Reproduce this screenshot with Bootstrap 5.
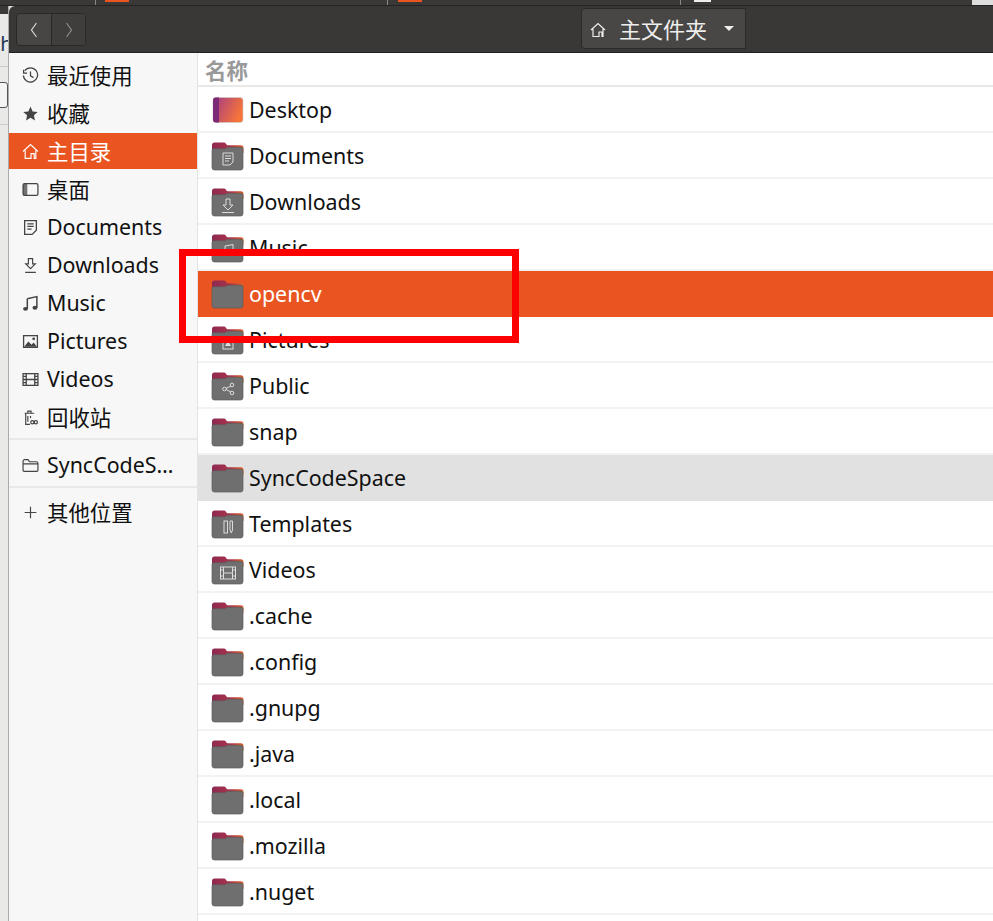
<!DOCTYPE html>
<html lang="zh">
<head>
<meta charset="utf-8">
<title>主文件夹</title>
<link href="https://cdn.jsdelivr.net/npm/bootstrap@5.3.3/dist/css/bootstrap.min.css" rel="stylesheet">
<style>
  html, body { height: 921px; overflow: hidden; }
  body { font-family: "Noto Sans", "Noto Sans CJK SC", sans-serif; font-size: 21.4px; color: #111; background: #e4e4e2; }
  .desk { width: 993px; height: 921px; position: relative; overflow: hidden; }
  /* bits of the browser behind the window */
  .topstrip { height: 6px; background: #3b3937; border-bottom: 1px solid #242322; position: relative; }
  .tabmark { position: absolute; top: 0; height: 2px; background: #e95420; }
  .tabwhite { position: absolute; top: 0; left: 694px; width: 17px; height: 2px; background: #eee; }
  .tabcorner { position: absolute; top: 0; right: 0; width: 21px; height: 5px; background: #ddd; }
  .tabsep { position: absolute; top: 0; height: 5px; width: 1px; background: #8a8886; }
  .backedge { width: 9px; flex: none; background: #e9e9e7; border-right: 1px solid #aaa; position: relative; overflow: hidden; }
  .backtab { height: 8px; background: #3b3937; }
  .backline { position: absolute; left: 0; right: 0; height: 1px; background: #ccc; }
  .backtext { position: absolute; left: -7px; top: 26px; font-size: 20px; line-height: 24px; color: #1c3555; }
  .backbox { position: absolute; left: -8px; top: 76px; width: 16px; height: 26px; border: 1px solid #555; border-radius: 3px; background: #f4f4f4; }
  .winbody { height: 915px; }
  .fm-window { flex: 1; min-width: 0; border-top-left-radius: 6px; overflow: hidden; background: #fff; }
  .fm-head { height: 47px; background: #3a3836; border-bottom: 1px solid #222; padding: 7px 0 0 7px; position: relative; }
  .navgroup { width: 70px; height: 33px; border: 1px solid #2a2827; border-radius: 4px; background: #484644; overflow: hidden; }
  .navbtn { width: 50%; height: 100%; }
  .navbtn + .navbtn { border-left: 1px solid #2a2827; background: #403e3c; }
  .pathbtn { position: absolute; left: 572px; top: 2px; width: 165px; height: 41px; background: #494745; border: 1px solid #2c2a29; border-radius: 4px 0 0 4px; color: #eee; font-size: 22px; padding-left: 8px; padding-top: 2px; gap: 13px; }
  .caret-down { width: 0; height: 0; border-left: 5px solid transparent; border-right: 5px solid transparent; border-top: 5px solid #eee; margin-left: 4px; margin-top: -3px; }
  .fm-side { width: 189px; flex: none; background: #f7f7f7; border-right: 1px solid #e3e3e3; padding-top: 4px; }
  .sideitem { height: 36px; margin-bottom: 2px; padding-left: 13px; gap: 8px; line-height: 1; white-space: nowrap; }
  .sideitem.active { background: #e95420; color: #fff; }
  .sideicon { width: 17px; height: 17px; flex: none; color: #444; }
  .active .sideicon { color: #fff; }
  .cjk-label { padding-top: 2px; }
  .sidesep { height: 2px; background: #e9e9e9; }
  .sidesep-a { margin-top: 3px; margin-bottom: 7px; }
  .sidesep-b { margin-top: 3px; margin-bottom: 6px; }
  .fm-main { flex: 1; min-width: 0; background: #fff; }
  .colhead { height: 34px; padding-left: 7px; border-bottom: 2px solid #e8e8e8; color: #999; font-weight: 700; font-size: 21.5px; line-height: 36px; }
  .filerow { height: 46px; padding: 2px 0 0 13px; gap: 5px; border-bottom: 2px solid #f2f2f2; line-height: 1; }
  .filerow.picked { background: #e95420; color: #fff; border-bottom-color: #e95420; }
  .filerow.hover-row { background: #e1e1e1; border-bottom-color: #e1e1e1; }
  .fileicon { width: 33px; height: 30px; flex: none; }
  .redbox { position: absolute; left: 179px; top: 249px; width: 340px; height: 94px; border: 7px solid #fe0000; pointer-events: none; }
</style>
</head>
<body>
<svg width="0" height="0" class="position-absolute">
  <defs>
    <linearGradient id="tabgrad" x1="0" x2="1" y1="0" y2="0">
      <stop offset="0" stop-color="#8c2a52"/><stop offset="0.55" stop-color="#a8324a"/><stop offset="1" stop-color="#e0632c"/>
    </linearGradient>
    <linearGradient id="deskgrad" x1="0" x2="1" y1="0" y2="0.4">
      <stop offset="0" stop-color="#a23a86"/><stop offset="1" stop-color="#f5743a"/>
    </linearGradient>
    <symbol id="folder" viewBox="0 0 33 30">
      <path d="M1 11V4a2.500 2.500 0 0 1 2.500-2.500h9c1.500 0 2 .5 3 2l.5 .7H30a2.500 2.500 0 0 1 2.500 2.500V12z" fill="url(#tabgrad)"/>
      <path d="M1 9.500c0-1 .8-1.700 1.700-1.700h10.500c1.300 0 2-.6 2.800-1.500h14.300c1 0 1.700 .8 1.700 1.700V26.500a2.500 2.500 0 0 1-2.500 2.500H3.500A2.500 2.500 0 0 1 1 26.500z" fill="#6f6f6f" stroke="#5c5c5c" stroke-width=".7"/>
    </symbol>
  </defs>
</svg>

<div class="desk">
  <div class="topstrip">
    <span class="tabsep" style="left:95px"></span>
    <span class="tabmark" style="left:105px;width:24px"></span>
    <span class="tabsep" style="left:387px"></span>
    <span class="tabmark" style="left:398px;width:24px"></span>
    <span class="tabsep" style="left:680px"></span>
    <span class="tabwhite"></span>
    <span class="tabcorner"></span>
  </div>
  <div class="d-flex winbody">
    <div class="backedge">
      <div class="backtab"></div>
      <span class="backline" style="top:60px"></span>
      <span class="backline" style="top:118px"></span>
      <span class="backtext">th</span>
      <span class="backbox"></span>
    </div>
    <div class="fm-window d-flex flex-column">
      <div class="fm-head">
        <div class="navgroup d-flex">
          <div class="navbtn d-flex align-items-center justify-content-center">
            <svg width="8" height="16" viewBox="0 0 8 16"><path d="M6.500 1 1.500 8l5 7" fill="none" stroke="#d6d6d4" stroke-width="1.200"/></svg>
          </div>
          <div class="navbtn d-flex align-items-center justify-content-center">
            <svg width="8" height="16" viewBox="0 0 8 16"><path d="M1.500 1l5 7-5 7" fill="none" stroke="#8e8c8a" stroke-width="1.200"/></svg>
          </div>
        </div>
        <div class="pathbtn d-flex align-items-center">
          <svg width="16" height="16" viewBox="0 0 16 16" fill="none" stroke="#eee" stroke-width="1.200"><path d="M1 8 8 1.500 15 8M3 7v7.500h6V10h3v4.500h1V7"/></svg>
          <span>主文件夹</span>
          <span class="caret-down"></span>
        </div>
      </div>
      <div class="d-flex flex-grow-1">
        <nav class="fm-side">
          <div class="sideitem d-flex align-items-center">
            <svg class="sideicon" viewBox="0 0 16 16" fill="none" stroke="currentColor" stroke-width="1.200"><path d="M2.600 3.500A6.700 6.700 0 1 1 1.300 8"/><path d="M1.500 2.500v3.300h3.300" /><path d="M8 4.200V8.300l2.800 1.700"/></svg>
            <span class="cjk-label">最近使用</span>
          </div>
          <div class="sideitem d-flex align-items-center">
            <svg class="sideicon" viewBox="0 0 16 16"><path d="M8 1.500l2 4.500 4.800.5-3.600 3.200 1 4.800L8 12l-4.200 2.500 1-4.800L1.200 6.500 6 6z" fill="currentColor"/></svg>
            <span class="cjk-label">收藏</span>
          </div>
          <div class="sideitem active d-flex align-items-center">
            <svg class="sideicon" viewBox="0 0 16 16" fill="none" stroke="currentColor" stroke-width="1.100"><path d="M1 8 8 1.500 15 8M3 7v7.500h5.500V10h3v4.500H13V7"/></svg>
            <span class="cjk-label">主目录</span>
          </div>
          <div class="sideitem d-flex align-items-center">
            <svg class="sideicon" viewBox="0 0 16 16"><rect x="1" y="2.500" width="14" height="11" rx="1.500" fill="none" stroke="currentColor" stroke-width="1.200"/><rect x="1" y="2.500" width="4" height="11" rx="1" fill="currentColor" opacity=".75"/></svg>
            <span class="cjk-label">桌面</span>
          </div>
          <div class="sideitem d-flex align-items-center">
            <svg class="sideicon" viewBox="0 0 16 16" fill="none" stroke="currentColor" stroke-width="1.200"><path d="M2.500 1.500h11v9l-4 4h-7z"/><path d="M5 4.500h6M5 7h6M5 9.500h4"/></svg>
            <span>Documents</span>
          </div>
          <div class="sideitem d-flex align-items-center">
            <svg class="sideicon" viewBox="0 0 16 16" fill="none" stroke="currentColor" stroke-width="1.100"><path d="M6 1.500h4v5h2.500L8 11 3.500 6.500H6zM3 14.500h10"/></svg>
            <span>Downloads</span>
          </div>
          <div class="sideitem d-flex align-items-center">
            <svg class="sideicon" viewBox="0 0 16 16"><path d="M5 3.500 14 1.500V12" fill="none" stroke="currentColor" stroke-width="1.400"/><path d="M5 3.500V13" fill="none" stroke="currentColor" stroke-width="1.400"/><ellipse cx="3.300" cy="13" rx="2.300" ry="1.800" fill="currentColor"/><ellipse cx="12.200" cy="12" rx="2.300" ry="1.800" fill="currentColor"/></svg>
            <span>Music</span>
          </div>
          <div class="sideitem d-flex align-items-center">
            <svg class="sideicon" viewBox="0 0 16 16"><rect x="1.500" y="2.500" width="13" height="11" fill="none" stroke="currentColor" stroke-width="1.200"/><path d="M2 13l4-5 3 3 2-2 3 4z" fill="currentColor"/><circle cx="11" cy="5.500" r="1.300" fill="currentColor"/></svg>
            <span>Pictures</span>
          </div>
          <div class="sideitem d-flex align-items-center">
            <svg class="sideicon" viewBox="0 0 16 16" fill="none" stroke="currentColor" stroke-width="1.200"><rect x="1" y="2.500" width="14" height="11"/><path d="M4 2.500v11M12 2.500v11M4 8h8M1 5h3M1 8h3M1 11h3M12 5h3M12 8h3M12 11h3"/></svg>
            <span>Videos</span>
          </div>
          <div class="sideitem d-flex align-items-center">
            <svg class="sideicon" viewBox="0 0 16 16" fill="none" stroke="currentColor" stroke-width="1.100"><path d="M2.500 4h9M5.500 4V2h3v2M3.500 4v10.500h4M5.500 6.500v5.500M8 6.500v2"/><circle cx="9.700" cy="12.500" r="1.500"/><circle cx="13" cy="12.500" r="1.500"/></svg>
            <span class="cjk-label">回收站</span>
          </div>
          <div class="sidesep sidesep-a"></div>
          <div class="sideitem d-flex align-items-center">
            <svg class="sideicon" viewBox="0 0 16 16" fill="none" stroke="currentColor" stroke-width="1.100"><path d="M1 4a1.500 1.500 0 0 1 1.500-1.500h3.200L7 4.500h6.500A1.500 1.500 0 0 1 15 6v6.500a1 1 0 0 1-1 1H2a1 1 0 0 1-1-1zM1 6.500h14"/></svg>
            <span>SyncCodeS…</span>
          </div>
          <div class="sidesep sidesep-b"></div>
          <div class="sideitem d-flex align-items-center">
            <svg class="sideicon" viewBox="0 0 16 16" fill="none" stroke="currentColor" stroke-width="1.100"><path d="M8 2.500v11M2.500 8h11"/></svg>
            <span class="cjk-label">其他位置</span>
          </div>
        </nav>
        <main class="fm-main">
          <div class="colhead">名称</div>
          <div class="filerow d-flex align-items-center">
            <svg class="fileicon" viewBox="0 0 33 30"><rect x="2" y="2.500" width="30" height="25" rx="3" fill="url(#deskgrad)" stroke="#ccc" stroke-width=".6"/><path d="M5 2.500h3v25H5a3 3 0 0 1-3-3v-19a3 3 0 0 1 3-3z" fill="#7b2a78"/></svg>
            <span>Desktop</span>
          </div>
          <div class="filerow d-flex align-items-center">
            <svg class="fileicon" viewBox="0 0 33 30"><use href="#folder"/><path d="M12 12h10v9l-3 3h-7z" fill="none" stroke="#ddd" stroke-width="1"/><path d="M14 15h6M14 17.500h6M14 20h4" stroke="#ddd"/></svg>
            <span>Documents</span>
          </div>
          <div class="filerow d-flex align-items-center">
            <svg class="fileicon" viewBox="0 0 33 30"><use href="#folder"/><path d="M15 12h4v6h3l-5 5-5-5h3zM11 25.500h12" fill="none" stroke="#ddd"/></svg>
            <span>Downloads</span>
          </div>
          <div class="filerow d-flex align-items-center">
            <svg class="fileicon" viewBox="0 0 33 30"><use href="#folder"/><path d="M14 13l8-1.500v8M14 13v9" fill="none" stroke="#ddd"/></svg>
            <span>Music</span>
          </div>
          <div class="filerow picked d-flex align-items-center">
            <svg class="fileicon" viewBox="0 0 33 30"><use href="#folder"/></svg>
            <span>opencv</span>
          </div>
          <div class="filerow d-flex align-items-center">
            <svg class="fileicon" viewBox="0 0 33 30"><use href="#folder"/><rect x="12" y="12" width="10" height="12" fill="none" stroke="#ddd"/><path d="M14 21l3-5 3 5z" fill="#ddd"/></svg>
            <span>Pictures</span>
          </div>
          <div class="filerow d-flex align-items-center">
            <svg class="fileicon" viewBox="0 0 33 30"><use href="#folder"/><path d="M14 18l7-3.500M14 18l7 3.500" stroke="#ddd"/><circle cx="13.500" cy="18" r="1.800" fill="#6f6f6f" stroke="#ddd"/><circle cx="21" cy="14" r="1.800" fill="#6f6f6f" stroke="#ddd"/><circle cx="21" cy="22" r="1.800" fill="#6f6f6f" stroke="#ddd"/></svg>
            <span>Public</span>
          </div>
          <div class="filerow d-flex align-items-center">
            <svg class="fileicon" viewBox="0 0 33 30"><use href="#folder"/></svg>
            <span>snap</span>
          </div>
          <div class="filerow hover-row d-flex align-items-center">
            <svg class="fileicon" viewBox="0 0 33 30"><use href="#folder"/></svg>
            <span>SyncCodeSpace</span>
          </div>
          <div class="filerow d-flex align-items-center">
            <svg class="fileicon" viewBox="0 0 33 30"><use href="#folder"/><rect x="13" y="12" width="3.500" height="12" fill="none" stroke="#ddd"/><path d="M19 12h2.500v9l-1.200 3-1.300-3z" fill="none" stroke="#ddd"/></svg>
            <span>Templates</span>
          </div>
          <div class="filerow d-flex align-items-center">
            <svg class="fileicon" viewBox="0 0 33 30"><use href="#folder"/><rect x="9.500" y="12" width="15" height="12" fill="none" stroke="#ddd"/><path d="M12.500 12v12M21.500 12v12M12.500 18h9M9.500 15h3M9.500 21h3M21.500 15h3M21.500 21h3" stroke="#ddd"/></svg>
            <span>Videos</span>
          </div>
          <div class="filerow d-flex align-items-center">
            <svg class="fileicon" viewBox="0 0 33 30"><use href="#folder"/></svg>
            <span>.cache</span>
          </div>
          <div class="filerow d-flex align-items-center">
            <svg class="fileicon" viewBox="0 0 33 30"><use href="#folder"/></svg>
            <span>.config</span>
          </div>
          <div class="filerow d-flex align-items-center">
            <svg class="fileicon" viewBox="0 0 33 30"><use href="#folder"/></svg>
            <span>.gnupg</span>
          </div>
          <div class="filerow d-flex align-items-center">
            <svg class="fileicon" viewBox="0 0 33 30"><use href="#folder"/></svg>
            <span>.java</span>
          </div>
          <div class="filerow d-flex align-items-center">
            <svg class="fileicon" viewBox="0 0 33 30"><use href="#folder"/></svg>
            <span>.local</span>
          </div>
          <div class="filerow d-flex align-items-center">
            <svg class="fileicon" viewBox="0 0 33 30"><use href="#folder"/></svg>
            <span>.mozilla</span>
          </div>
          <div class="filerow d-flex align-items-center">
            <svg class="fileicon" viewBox="0 0 33 30"><use href="#folder"/></svg>
            <span>.nuget</span>
          </div>
        </main>
      </div>
    </div>
  </div>
  <div class="redbox"></div>
</div>
<script src="https://cdn.jsdelivr.net/npm/bootstrap@5.3.3/dist/js/bootstrap.bundle.min.js"></script>
</body>
</html>
